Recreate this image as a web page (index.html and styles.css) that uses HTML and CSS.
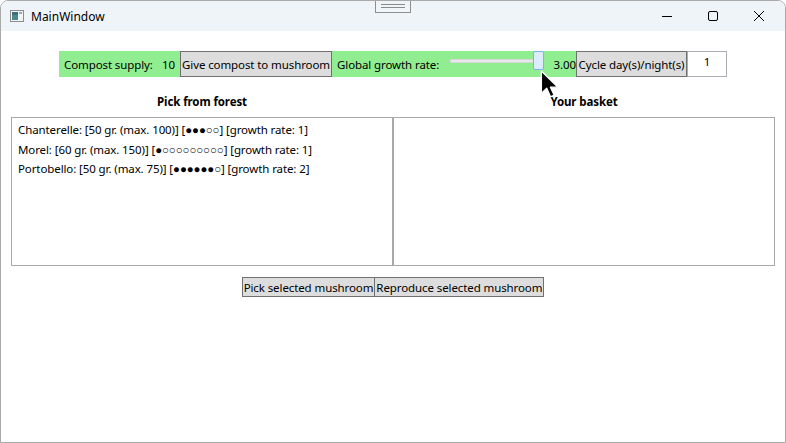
FILE: index.html
```html
<!DOCTYPE html>
<html>
<head>
<meta charset="utf-8">
<link rel="stylesheet" href="styles.css">
</head>
<body>
<div class="window">
  <div class="titlebar">
    <svg class="appicon" width="14" height="12" viewBox="0 0 14 12">
      <rect x="0.5" y="0.5" width="13" height="11" fill="#f4f4f4" stroke="#8c8c8c"/>
      <rect x="2" y="2" width="6" height="8" fill="#4a8a8c"/>
      <rect x="2" y="2" width="6" height="3" fill="#3a7078"/>
      <rect x="9" y="2" width="3" height="2" fill="#9ab"/>
    </svg>
    <span class="title">MainWindow</span>
    <div class="grip"><span></span><span></span></div>
    <div class="controls">
      <svg class="ctl" width="46" height="30" viewBox="0 0 46 30"><line x1="18" y1="15.5" x2="28" y2="15.5" stroke="#000" stroke-width="1"/></svg>
      <svg class="ctl" width="46" height="30" viewBox="0 0 46 30"><rect x="18.5" y="10.5" width="9" height="9" rx="1.5" fill="none" stroke="#000" stroke-width="1"/></svg>
      <svg class="ctl" width="46" height="30" viewBox="0 0 46 30"><path d="M18 10 L28 20 M28 10 L18 20" stroke="#000" stroke-width="1"/></svg>
    </div>
  </div>
  <div class="content">
    <div class="toolbar">
      <div class="green">
        <span class="lbl">Compost supply:</span>
        <span class="val">10</span>
        <span class="btn">Give compost to mushroom</span>
        <span class="lbl lbl2">Global growth rate:</span>
        <div class="slider"><div class="track"></div><div class="thumb"></div></div>
        <span class="rate">3.00</span>
      </div>
      <span class="btn">Cycle day(s)/night(s)</span>
      <span class="textbox">1</span>
    </div>
    <div class="columns">
      <div class="col">
        <div class="head">Pick from forest</div>
        <div class="list">
          <div class="item">Chanterelle: [50 gr. (max. 100)] [●●●○○] [growth rate: 1]</div>
          <div class="item">Morel: [60 gr. (max. 150)] [●○○○○○○○○○] [growth rate: 1]</div>
          <div class="item">Portobello: [50 gr. (max. 75)] [●●●●●●○] [growth rate: 2]</div>
        </div>
      </div>
      <div class="col">
        <div class="head">Your basket</div>
        <div class="list"></div>
      </div>
    </div>
    <div class="actions">
      <span class="btn">Pick selected mushroom</span>
      <span class="btn">Reproduce selected mushroom</span>
    </div>
  </div>
  <svg class="cursor" width="22" height="30" viewBox="0 0 20 28">
    <path d="M1 1 L1 22 L6 17 L9.5 25 L13 23.5 L9.5 16 L16.5 16 Z" fill="#000" stroke="#fff" stroke-width="1.3" stroke-linejoin="round"/>
  </svg>
</div>
</body>
</html>
```
FILE: styles.css
```css
* { box-sizing: border-box; }
html, body { margin: 0; padding: 0; background: #fff; }
body { font-family: "Noto Sans", "Liberation Sans", sans-serif; font-size: 11.5px; letter-spacing: -0.1px; color: #000; }
.window {
  position: relative;
  width: 786px; height: 443px;
  border: 1px solid #a9a9a9;
  border-radius: 8px 8px 0 0;
  overflow: hidden;
  background: #fff;
}
.titlebar {
  position: relative;
  height: 30px;
  background: #eff4f9;
  display: flex;
  align-items: center;
}
.appicon { margin-left: 9px; }
.title { margin-left: 7px; font-size: 12px; letter-spacing: 0; }
.grip {
  position: absolute; left: 374px; top: -1px;
  width: 36px; height: 13px;
  border: 1px solid #8f8f8f; border-top: none;
  background: #eff4f9;
  display: flex; flex-direction: column; align-items: center; justify-content: center; gap: 2px;
}
.grip span { display: block; width: 24px; height: 1px; background: #8a8a8a; }
.controls { margin-left: auto; display: flex; margin-right: 3px; }
.ctl { display: block; }
.content { display: flex; flex-direction: column; align-items: center; padding-top: 20px; }
.toolbar { display: flex; height: 26px; white-space: nowrap; }
.green {
  display: flex; align-items: center;
  background: #90ee90;
  width: 517px;
  height: 26px;
}
.lbl { padding-left: 5px; width: 103px; flex: none; }
.val { width: 18px; flex: none; }
.btn {
  display: flex; align-items: center; justify-content: center;
  background: #dddddd;
  border: 1px solid #707070;
  height: 26px;
  padding: 0 1px;
  white-space: nowrap;
  flex: none;
}
.green .btn { width: 152px; }
.lbl2 { width: 118px; }
.slider { position: relative; width: 95px; height: 26px; flex: none; }
.track {
  position: absolute; left: 0; top: 8px; width: 85px; height: 4px;
  background: #e7eaea; border: 1px solid #d6d6d6;
}
.thumb {
  position: absolute; left: 83px; top: 0; width: 11px; height: 19px;
  background: #dcecfc; border: 1px solid #7eb4ea; border-radius: 2px;
}
.rate { margin-left: auto; }
.toolbar > .btn { width: 111px; }
.textbox {
  width: 40px; height: 26px;
  border: 1px solid #abadb3;
  display: flex; justify-content: center; padding-top: 2px;
}
.columns { display: flex; width: 764px; margin-top: 16px; }
.col { flex: 1; display: flex; flex-direction: column; }
.head { font-weight: bold; text-align: center; height: 24px; line-height: 18px; }
.list {
  height: 149px;
  border: 1px solid #a8a8a8;
  padding: 2px 6px;
}
.col + .col .list { border-left-width: 2px; margin-left: -1px; }
.item { height: 19.5px; line-height: 19px; white-space: nowrap; }
.actions { display: flex; margin-top: 11px; }
.actions .btn { height: 20px; }
.actions .btn + .btn { border-left: none; }
.cursor { position: absolute; left: 539px; top: 69px; }
```
